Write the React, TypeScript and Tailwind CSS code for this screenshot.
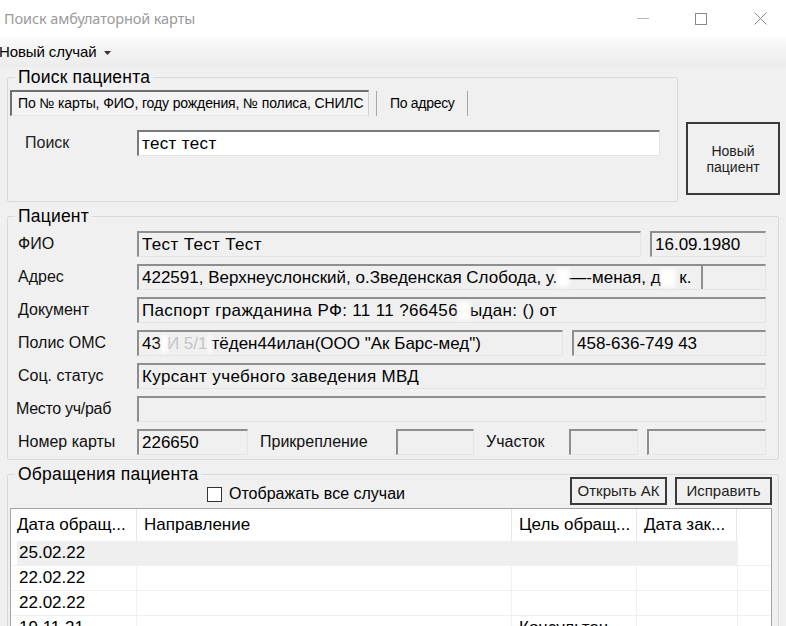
import React from "react";

const box =
  "h-[26px] border-t-2 border-l-2 border-b border-r border-t-[#8e8e8e] border-l-[#8e8e8e] border-b-[#e4e4e4] border-r-[#e4e4e4] bg-[#f0f0f0] flex items-center pl-[3px] text-[17px] tracking-[0.35px] text-black whitespace-nowrap overflow-hidden";

function Blur({ w }: { w: string }) {
  return <span className={`inline-block h-[18px] ${w} bg-white blur-[2px] align-middle`} />;
}

function Label({ children }: { children: React.ReactNode }) {
  return <div className="w-[119px] shrink-0 text-[16px] text-[#111]">{children}</div>;
}

export default function App() {
  return (
    <div className="w-[786px] h-[626px] overflow-hidden bg-[#f0f0f0] flex flex-col font-['Liberation_Sans',Arial,sans-serif] text-black">
      {/* title bar */}
      <div className="h-[37px] bg-white flex items-center shrink-0">
        <div className="pl-[4px] text-[14.5px] text-[#9a9a9a] font-['Noto_Sans',sans-serif] tracking-[-0.1px]">Поиск амбулаторной карты</div>
        <div className="ml-auto flex items-center mr-[19px]">
          <svg width="12" height="12" viewBox="0 0 12 12" className="mr-[46px]">
            <line x1="0" y1="5.5" x2="12" y2="5.5" stroke="#b5b5b5" strokeWidth="1" />
          </svg>
          <svg width="12" height="12" viewBox="0 0 12 12" className="mr-[47px]">
            <rect x="0.5" y="0.5" width="11" height="11" fill="none" stroke="#8a8a8a" strokeWidth="1" />
          </svg>
          <svg width="13" height="13" viewBox="0 0 13 13">
            <path d="M0.5 0.5 L12.5 12.5 M12.5 0.5 L0.5 12.5" stroke="#8a8a8a" strokeWidth="1" />
          </svg>
        </div>
      </div>
      {/* menu strip */}
      <div className="h-[30px] shrink-0 bg-gradient-to-b from-[#fbfbfb] to-[#ebebeb] flex items-center">
        <span className="text-[15px] ml-[-1px] tracking-[-0.1px]">Новый случай</span>
        <svg width="7" height="4" viewBox="0 0 7 4" className="ml-[7px] mt-[1px]">
          <path d="M0 0 L7 0 L3.5 4 Z" fill="#333" />
        </svg>
      </div>

      <div className="pl-[7px] flex flex-col">
        {/* search row */}
        <div className="flex mt-[10px]">
          <div className="relative w-[671px] h-[125px] border border-[#d9d9d9] rounded-[2px]">
            <div className="absolute left-[7px] top-[-11px] px-[3px] bg-[#f0f0f0] text-[17.5px] tracking-[0.2px] leading-[20px]">Поиск пациента</div>
            <div className="flex items-center mt-[12px] ml-[2px]">
              <div className="w-[359px] h-[26px] border-t-2 border-l-2 border-t-[#6e6e6e] border-l-[#6e6e6e] border-b border-r border-b-[#e8e8e8] border-r-[#d0d0d0] bg-[#f3f3f3] flex items-center pl-[6px] text-[14px] tracking-[-0.12px] whitespace-nowrap">
                По № карты, ФИО, году рождения, № полиса, СНИЛС
              </div>
              <div className="w-px h-[25px] bg-[#a8a8a8] ml-[7px]" />
              <div className="text-[14px] tracking-[-0.3px] ml-[13px]">По адресу</div>
              <div className="w-px h-[25px] bg-[#a8a8a8] ml-[12px]" />
            </div>
            <div className="flex items-center mt-[14px]">
              <div className="pl-[17px] w-[129px] text-[16px] text-[#222]">Поиск</div>
              <div className="w-[523px] h-[26px] border-t-2 border-l-2 border-t-[#7a7a7a] border-l-[#7a7a7a] border-b border-r border-b-[#e4e4e4] border-r-[#e4e4e4] bg-white flex items-center pl-[3px] text-[17px] tracking-[0.35px]">
                тест тест
              </div>
            </div>
          </div>
          <div className="ml-[8px] mt-[45px] w-[94px] h-[73px] border-2 border-[#3a3a3a] bg-[#f0f0f0] flex items-center justify-center text-center text-[14px] leading-[16px] text-[#222]">
            Новый
            <br />
            пациент
          </div>
        </div>

        {/* patient group */}
        <div className="relative mt-[14px] w-[772px] h-[244px] border border-[#d9d9d9] rounded-[2px] pt-[14px] pl-[10px] flex flex-col gap-[7px]">
          <div className="absolute left-[7px] top-[-11px] px-[3px] bg-[#f0f0f0] text-[17.5px] tracking-[0.2px] leading-[20px]">Пациент</div>
          <div className="flex items-center">
            <Label>ФИО</Label>
            <div className={`${box} w-[504px]`}>Тест Тест Тест</div>
            <div className={`${box} w-[116px] ml-[9px] tracking-[0px]`}>16.09.1980</div>
          </div>
          <div className="flex items-center">
            <Label>Адрес</Label>
            <div className={`${box} w-[629px] pr-0 tracking-[0px]`}>
              <span className="flex-1 overflow-hidden">
                422591, Верхнеуслонский, о.Зведенская Слобода, у.
                <Blur w="w-[12px]" />
                —-меная, д
                <Blur w="w-[14px]" /> к.
              </span>
              <div className="w-[64px] h-full border-l-2 border-l-[#8e8e8e] bg-[#f0f0f0]" />
            </div>
          </div>
          <div className="flex items-center">
            <Label>Документ</Label>
            <div className={`${box} w-[629px] tracking-[0.1px]`}>
              Паспорт гражданина РФ: 11 11 ?66456
              <Blur w="w-[12px]" />
              ыдан: () от
            </div>
          </div>
          <div className="flex items-center">
            <Label>Полис ОМС</Label>
            <div className={`${box} w-[426px] tracking-[0px]`}>
              43
              <Blur w="w-[6px]" />
              <span className="text-[#c4c4c4]">И 5/1</span>
              <Blur w="w-[4px]" />
              тёден44илан(ООО "Ак Барс-мед")
            </div>
            <div className={`${box} w-[194px] ml-[9px] tracking-[0px]`}>458-636-749 43</div>
          </div>
          <div className="flex items-center">
            <Label>Соц. статус</Label>
            <div className={`${box} w-[629px]`}>Курсант учебного заведения МВД</div>
          </div>
          <div className="flex items-center">
            <div className="w-[119px] shrink-0 text-[16px] text-[#111] ml-[-2px] mr-[2px] tracking-[-0.3px]">Место уч/раб</div>
            <div className={`${box} w-[629px]`} />
          </div>
          <div className="flex items-center">
            <Label>Номер карты</Label>
            <div className={`${box} w-[111px] tracking-[0px]`}>226650</div>
            <div className="w-[148px] pl-[12px] text-[16px] text-[#111]">Прикрепление</div>
            <div className={`${box} w-[78px]`} />
            <div className="w-[95px] pl-[12px] text-[16px] text-[#111]">Участок</div>
            <div className={`${box} w-[69px]`} />
            <div className={`${box} w-[119px] ml-[9px]`} />
          </div>
        </div>

        {/* visits group */}
        <div className="relative mt-[14px] w-[772px] h-[200px] border border-[#d9d9d9] rounded-[2px] flex flex-col">
          <div className="absolute left-[7px] top-[-11px] px-[3px] bg-[#f0f0f0] text-[17.5px] tracking-[0.2px] leading-[20px]">Обращения пациента</div>
          <div className="flex items-start mt-[2px]">
            <div className="flex items-center ml-[199px] mt-[5px]">
              <div className="w-[15px] h-[15px] border border-[#333] bg-white" />
              <span className="ml-[7px] text-[16px]">Отображать все случаи</span>
            </div>
            <div className="ml-auto mr-[6px] flex gap-[8px]">
              <div className="w-[97px] h-[28px] border-2 border-[#3a3a3a] flex items-center justify-center text-[15px] text-[#222]">Открыть АК</div>
              <div className="w-[97px] h-[28px] border-2 border-[#3a3a3a] flex items-center justify-center text-[15px] text-[#222]">Исправить</div>
            </div>
          </div>
          <div className="mt-[2px] ml-[2px] mr-[6px] h-[160px] border border-[#a3a3a3] bg-white flex flex-col text-[17px]">
            <div className="flex h-[32px] shrink-0">
              <div className="w-[126px] border-r border-[#e8e8e8] pl-[6px] flex items-center whitespace-nowrap">Дата обращ...</div>
              <div className="w-[375px] border-r border-[#e8e8e8] pl-[7px] flex items-center">Направление</div>
              <div className="w-[125px] border-r border-[#e8e8e8] pl-[7px] flex items-center whitespace-nowrap">Цель обращ...</div>
              <div className="w-[100px] border-r border-[#e8e8e8] pl-[7px] flex items-center whitespace-nowrap">Дата зак...</div>
              <div className="flex-1" />
            </div>
            {[
              { d: "25.02.22", c: "", sel: true },
              { d: "22.02.22", c: "", sel: false },
              { d: "22.02.22", c: "", sel: false },
              { d: "19.11.21", c: "Консультац...", sel: false },
            ].map((r, i) => (
              <div key={i} className="flex h-[25px] shrink-0 border-b border-[#f0f0f0]">
                <div className="w-[6px]" />
                <div className={`flex ${r.sel ? "bg-[#efefef]" : ""}`}>
                  <div className={`w-[120px] pl-[2px] flex items-center ${r.sel ? "" : "border-r border-[#f0f0f0]"}`}>{r.d}</div>
                  <div className={`w-[375px] ${r.sel ? "" : "border-r border-[#f0f0f0]"}`} />
                  <div className={`w-[125px] pl-[7px] flex items-center whitespace-nowrap ${r.sel ? "" : "border-r border-[#f0f0f0]"}`}>{r.c}</div>
                  <div className={`w-[101px] ${r.sel ? "" : "border-r border-[#f0f0f0]"}`} />
                </div>
                <div className="flex-1" />
              </div>
            ))}
          </div>
        </div>
      </div>
    </div>
  );
}
